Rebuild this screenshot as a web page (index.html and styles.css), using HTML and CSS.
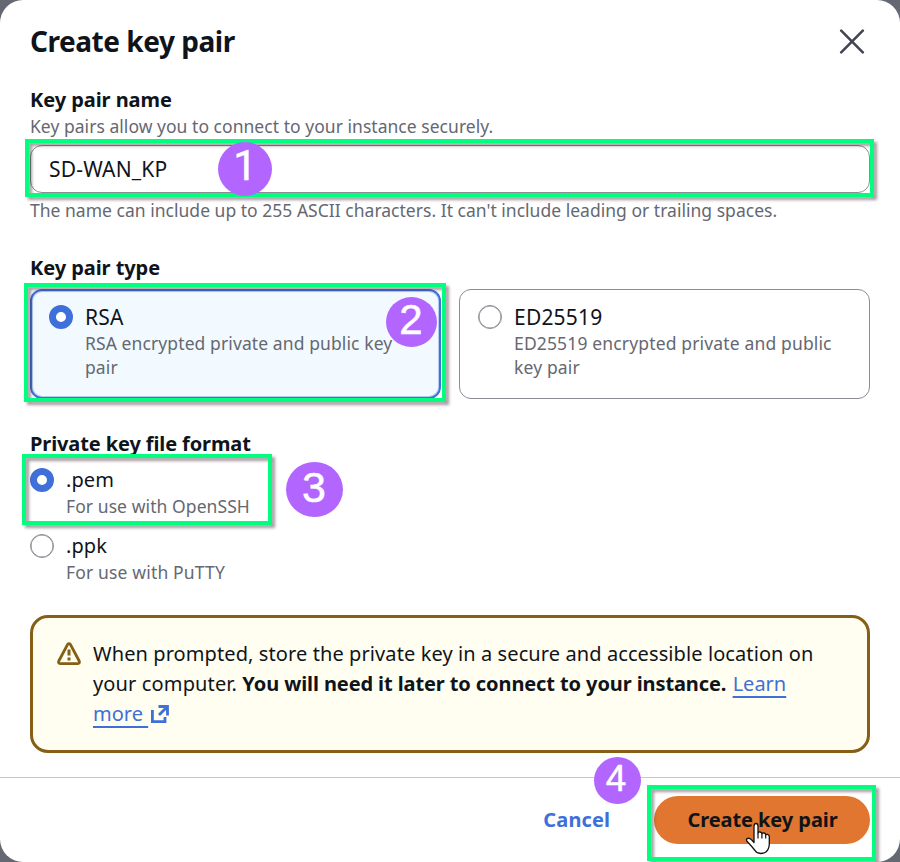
FILE: index.html
```html
<!DOCTYPE html>
<html lang="en">
<head>
<meta charset="utf-8">
<title>Create key pair</title>
<link rel="stylesheet" href="styles.css">
</head>
<body>
<div class="modal">
  <header class="modal-header">
    <h1 class="title">Create key pair</h1>
    <svg class="close" viewBox="0 0 26 26" width="26" height="26"><path d="M2.2 2.7l21.6 21.6M23.8 2.7L2.2 24.3" fill="none" stroke="#424650" stroke-width="2.6" stroke-linecap="round"/></svg>
  </header>

  <main class="modal-body">
    <section class="field">
      <h2 class="label">Key pair name</h2>
      <p class="hint name-hint">Key pairs allow you to connect to your instance securely.</p>
      <div class="input">SD-WAN_KP</div>
      <p class="hint constraint">The name can include up to 255 ASCII characters. It can't include leading or trailing spaces.</p>
    </section>

    <section class="field type-field">
      <h2 class="label">Key pair type</h2>
      <div class="tiles">
        <div class="tile tile-selected">
          <span class="radio radio-on"></span>
          <div class="option">
            <div class="option-label wide">RSA</div>
            <p class="hint rsa-hint">RSA encrypted private and public key pair</p>
          </div>
        </div>
        <div class="tile">
          <span class="radio"></span>
          <div class="option">
            <div class="option-label wide">ED25519</div>
            <p class="hint ed-hint">ED25519 encrypted private and public key pair</p>
          </div>
        </div>
      </div>
    </section>

    <section class="field">
      <h2 class="label format-label">Private key file format</h2>
      <div class="radio-group">
        <div class="radio-row">
          <span class="radio radio-on"></span>
          <div class="option">
            <div class="option-label">.pem</div>
            <p class="hint openssh-hint">For use with OpenSSH</p>
          </div>
        </div>
        <div class="radio-row">
          <span class="radio"></span>
          <div class="option">
            <div class="option-label">.ppk</div>
            <p class="hint putty-hint">For use with PuTTY</p>
          </div>
        </div>
      </div>
    </section>

    <div class="alert">
      <svg class="alert-icon" viewBox="0 0 24 24" width="24" height="24"><path d="M10.5 2.6Q12 .8 13.5 2.6L22.2 19Q23 21.6 20.8 21.6H3.2Q1 21.6 1.8 19Z" fill="none" stroke="#855f15" stroke-width="2.8" stroke-linejoin="round"/><path d="M12 7.6v6M12 15.4v3" stroke="#855f15" stroke-width="3"/></svg>
      <p class="alert-text">When prompted, store the private key in a secure and accessible location on<br><span class="lead">your computer.</span> <b>You will need it later to connect to your instance.</b> <a class="link">Learn<br>more&nbsp;</a><svg class="external" viewBox="0 0 18 18" width="18" height="18"><path d="M1.4 5v11.6H14V12M7.5 1.5h9v9M16 2L8 10" fill="none" stroke="#3f6fd9" stroke-width="2.8"/></svg></p>
    </div>
  </main>

  <footer class="modal-footer">
    <span class="cancel">Cancel</span>
    <div class="create">Create key pair</div>
  </footer>

  <div class="box box-1"></div>
  <div class="box box-2"></div>
  <div class="box box-3"></div>
  <div class="box box-4"></div>
  <div class="step step-1">1</div>
  <div class="step step-2">2</div>
  <div class="step step-3">3</div>
  <div class="step step-4">4</div>
  <svg class="cursor" viewBox="0 0 26 34" width="26" height="34"><path d="M9 16.8V4.2Q9 1.5 11 1.5T13 4.2V11q.4-1.2 2-1 1.8.2 1.9 1.8.5-1 2-.8 1.7.2 1.8 1.8.6-.6 1.8-.4 1.8.4 1.8 2.2V22q0 3.4-1.5 5.8Q21 31.5 15.8 31.5q-4 0-5.8-3Q8.5 26.5 6.5 24.2L2 19.3Q.8 17.6 2.2 16.6q1.4-.8 3 .2Q7 18 9 20.5Z" fill="#fff" stroke="#111" stroke-width="1.3" stroke-linejoin="round"/><path d="M13 11v5.5M16.9 12v4.5M20.7 13v3.5" fill="none" stroke="#111" stroke-width="1.2"/></svg>
</div>
</body>
</html>
```
FILE: styles.css
```css
* { box-sizing: border-box; }

body {
  margin: 0;
  background: #656871;
  font-family: "Noto Sans", sans-serif;
  font-size: 20px;
  color: #0f141a;
}

h1, h2, p { margin: 0; }

.modal {
  position: relative;
  display: flex;
  flex-direction: column;
  width: 900px;
  height: 862px;
  overflow: hidden;
  background: #fff;
  border-radius: 23px;
}

.modal-header {
  display: flex;
  justify-content: space-between;
  align-items: center;
  padding: 26px 35px 0 30px;
  height: 56px;
}

.title {
  font-size: 28px;
  line-height: 30px;
  letter-spacing: -0.46px;
}

.modal-body {
  display: flex;
  flex-direction: column;
  padding: 29px 30px 24px;
}

.field { margin-bottom: 31px; }
.type-field { margin-bottom: 30px; }

.label {
  font-size: 20px;
  line-height: 30px;
  letter-spacing: -0.06px;
}
.format-label { letter-spacing: -0.11px; }

.hint {
  font-size: 17.5px;
  line-height: 24px;
  color: #656871;
}
.name-hint { margin-top: -1px; letter-spacing: 0.035px; }
.constraint { margin-top: 5px; letter-spacing: 0.018px; }
.rsa-hint { letter-spacing: 0.1px; }
.ed-hint { letter-spacing: 0.15px; }
.openssh-hint { letter-spacing: 0.08px; }
.putty-hint { letter-spacing: 0.16px; }

.input {
  height: 48px;
  margin-top: 7px;
  padding: 0 18px;
  border: 1px solid #8c8c94;
  border-radius: 12px;
  font-size: 21px;
  line-height: 46px;
  letter-spacing: 0.18px;
}

.tiles {
  display: grid;
  grid-template-columns: 1fr 1fr;
  gap: 18px;
  margin-top: 6px;
}

.tile {
  display: flex;
  gap: 12px;
  height: 110px;
  padding: 12px 18px;
  border: 1px solid #8c8c94;
  border-radius: 12px;
}
.tile-selected {
  padding: 11px 17px;
  border: 2px solid #3f6fd9;
  background: #f2faff;
  box-shadow: inset 0 0 0 1px rgba(63, 111, 217, 0.35);
}

.radio {
  flex: none;
  width: 24px;
  height: 24px;
  margin-top: 3px;
  border: 1px solid #8c8c94;
  border-radius: 50%;
  background: #fff;
  box-shadow: inset 0 0 0 0.5px #8c8c94;
}
.radio-on { border: 7px solid #3f6fd9; box-shadow: none; }

.option-label {
  line-height: 29px;
  letter-spacing: 0.1px;
}
.wide {
  margin-bottom: -2px;
  font-size: 21px;
  line-height: 31px;
  letter-spacing: 0.2px;
}

.radio-group {
  display: flex;
  flex-direction: column;
  gap: 13px;
  margin-top: 6px;
}
.radio-row { display: flex; gap: 12px; }

.alert {
  display: flex;
  gap: 12px;
  height: 138px;
  padding: 21px 24px 20px;
  border: 3px solid #855f15;
  border-radius: 18px;
  background: #fffef0;
}
.alert-icon { flex: none; margin-top: 3px; }
.alert-text {
  line-height: 30px;
  letter-spacing: 0.095px;
  white-space: nowrap;
}
.lead { letter-spacing: 0.14px; }
.alert-text b { letter-spacing: -0.1px; }

.link {
  margin-left: 1px;
  color: #3f6fd9;
  letter-spacing: 0;
  text-decoration: underline;
  text-decoration-thickness: 2px;
  text-decoration-skip-ink: none;
  text-underline-offset: 5px;
}
.external { margin-left: 3px; vertical-align: -2px; }

.modal-footer {
  display: flex;
  justify-content: flex-end;
  align-items: center;
  gap: 44px;
  height: 85px;
  padding: 0 30px;
  border-top: 1px solid #c6c6cd;
}
.cancel {
  padding-bottom: 1px;
  font-weight: 700;
  color: #3f6fd9;
  letter-spacing: 0.1px;
}
.create {
  width: 216px;
  height: 48px;
  padding-left: 1px;
  border-radius: 24px;
  background: #e0762f;
  font-weight: 700;
  line-height: 47px;
  text-align: center;
  letter-spacing: -0.07px;
}

/* Walkthrough annotations laid over the dialog */
.box {
  position: absolute;
  border: 4px solid #00ff7f;
  filter: drop-shadow(3px 3px 1.5px rgba(40, 20, 30, 0.42));
}
.box-1 { left: 25px; top: 139px; width: 849px; height: 58px; }
.box-2 { left: 24px; top: 283px; width: 422px; height: 119px; }
.box-3 { left: 22px; top: 454px; width: 250px; height: 71px; }
.box-4 { left: 647px; top: 785px; width: 229px; height: 76px; }

.step {
  position: absolute;
  border-radius: 50%;
  background: #b266ff;
  color: #fff;
  font-family: "Liberation Sans", sans-serif;
  font-size: 42px;
  -webkit-text-stroke: 0.5px #fff;
  text-align: center;
}
.step-1 { left: 218px; top: 142px; width: 54px; height: 54px; line-height: 48px; font-family: Roboto, sans-serif; }
.step-2 { left: 386px; top: 297px; width: 51px; height: 50px; padding-right: 1px; line-height: 46px; }
.step-3 { left: 286px; top: 462px; width: 57px; height: 55px; padding-right: 1px; line-height: 50px; font-size: 43px; }
.step-4 { left: 594px; top: 757px; width: 47px; height: 47px; padding-right: 3px; line-height: 43px; font-size: 37px; }

.cursor { position: absolute; left: 745px; top: 822px; }
```
